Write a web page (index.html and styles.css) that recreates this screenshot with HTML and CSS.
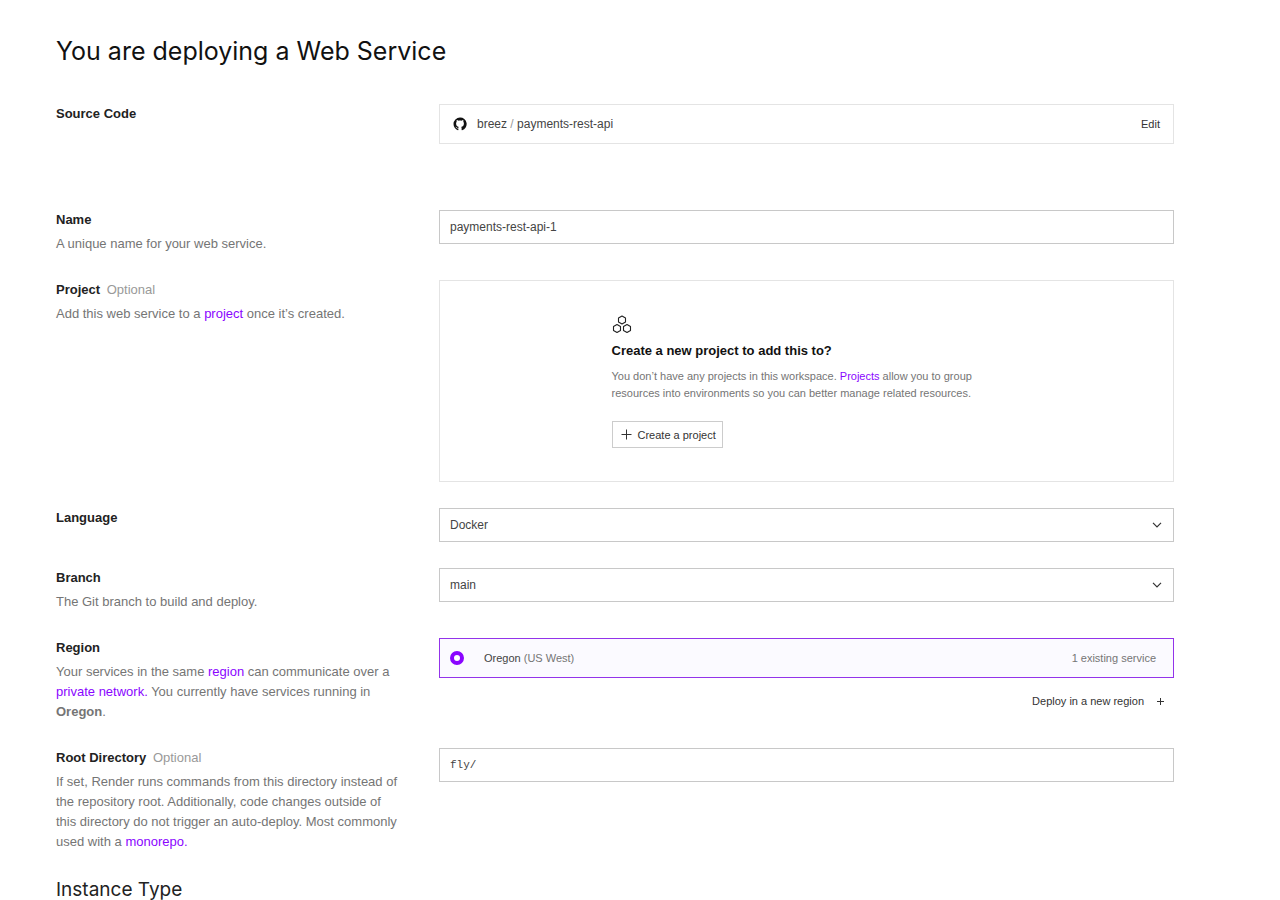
FILE: index.html
```html
<!DOCTYPE html>
<html lang="en">
<head>
  <meta charset="utf-8">
  <meta name="viewport" content="width=device-width, initial-scale=1">
  <title>New Web Service</title>
  <link rel="stylesheet" href="styles.css">
</head>
<body>
  <main class="page">
    <h1 class="page-title">You are deploying a Web Service</h1>
    <form class="form">
      <section class="row row-source">
        <div class="info"><h2 class="label">Source Code</h2></div>
        <div class="repo">
          <svg class="repo-icon" viewBox="0 0 14 14" width="14" height="14" aria-hidden="true"><path fill="currentColor" d="M7 .5A6.500 6.500 0 0 0 .5 7c0 2.900 1.800 5.300 4.400 6.200.4.100.5-.1.5-.4v-1.300c-1.700.3-2.200-.5-2.400-.9-.2-.4-.4-.7-.7-.9.5-.2 1 .2 1.300.6.500.8 1.200.8 1.800.5.1-.4.200-.7.4-.9-1.500-.3-2.700-1-2.700-3.300 0-.8.2-1.400.6-1.900-.2-.5-.2-1.100.1-1.700.7 0 1.300.4 1.800.7.900-.2 1.900-.2 2.800 0 .5-.3 1.100-.7 1.800-.7.3.6.3 1.200.1 1.700.4.500.6 1.100.6 1.900 0 2.300-1.200 3-2.700 3.300.3.300.4.700.4 1.200v1.700c0 .3.1.5.5.4A6.500 6.500 0 0 0 7 .5z"/></svg>
          <span class="repo-name">breez <span class="slash">/</span> payments-rest-api</span>
          <button class="text-button" type="button">Edit</button>
        </div>
      </section>

      <section class="row">
        <div class="info">
          <label class="label" for="name">Name</label>
          <p class="help">A unique name for your web service.</p>
        </div>
        <input class="field" id="name" type="text" value="payments-rest-api-1">
      </section>

      <section class="row">
        <div class="info">
          <h2 class="label">Project <span class="optional">Optional</span></h2>
          <p class="help">Add this web service to a <a href="#project">project</a> once it’s created.</p>
        </div>
        <div class="project">
          <div class="project-body">
            <svg class="project-icon" viewBox="0 0 20 20" width="20" height="20" fill="none" stroke="currentColor" stroke-width="1.1" stroke-linejoin="round" aria-hidden="true"><path d="M10 2l3.500 2v4L10 10 6.500 8V4zM5 10.500l3.500 2v4l-3.500 2-3.500-2v-4zM15 10.500l3.500 2v4l-3.500 2-3.500-2v-4z"/></svg>
            <h3 class="project-title">Create a new project to add this to?</h3>
            <p class="project-text">You don’t have any projects in this workspace. <a href="#projects">Projects</a> allow you to group resources into environments so you can better manage related resources.</p>
            <button class="outline-button" type="button">
              <svg viewBox="0 0 11 11" width="11" height="11" fill="none" stroke="currentColor" aria-hidden="true"><path d="M5.500 .5v10M.5 5.500h10"/></svg>
              Create a project
            </button>
          </div>
        </div>
      </section>

      <section class="row">
        <div class="info"><label class="label" for="language">Language</label></div>
        <div class="select">
          <select class="field" id="language"><option>Docker</option></select>
          <svg class="chevron" viewBox="0 0 10 6" width="10" height="6" fill="none" stroke="currentColor" stroke-width="1.2" aria-hidden="true"><path d="M1 .8l4 4 4-4"/></svg>
        </div>
      </section>

      <section class="row">
        <div class="info">
          <label class="label" for="branch">Branch</label>
          <p class="help">The Git branch to build and deploy.</p>
        </div>
        <div class="select">
          <select class="field" id="branch"><option>main</option></select>
          <svg class="chevron" viewBox="0 0 10 6" width="10" height="6" fill="none" stroke="currentColor" stroke-width="1.2" aria-hidden="true"><path d="M1 .8l4 4 4-4"/></svg>
        </div>
      </section>

      <section class="row">
        <div class="info">
          <h2 class="label">Region</h2>
          <p class="help">Your services in the same <a href="#region">region</a> can communicate over a <a href="#network">private network.</a> You currently have services running in <strong>Oregon</strong>.</p>
        </div>
        <div class="regions">
          <label class="region" for="oregon">
            <input class="radio" id="oregon" type="radio" name="region" checked>
            <span class="region-name">Oregon <span class="muted">(US West)</span></span>
            <span class="muted">1 existing service</span>
          </label>
          <button class="text-button new-region" type="button">
            Deploy in a new region
            <svg viewBox="0 0 7 7" width="7" height="7" fill="none" stroke="currentColor" aria-hidden="true"><path d="M3.500 0v7M0 3.500h7"/></svg>
          </button>
        </div>
      </section>

      <section class="row">
        <div class="info">
          <label class="label" for="root">Root Directory <span class="optional">Optional</span></label>
          <p class="help">If set, Render runs commands from this directory instead of the repository root. Additionally, code changes outside of this directory do not trigger an auto-deploy. Most commonly used with a <a href="#monorepo">monorepo.</a></p>
        </div>
        <input class="field mono" id="root" type="text" value="fly/">
      </section>

      <h2 class="section-title">Instance Type</h2>
    </form>
  </main>
</body>
</html>
```
FILE: styles.css
```css
* { box-sizing: border-box; }

body {
  margin: 0;
  background: #fff;
  color: #222;
  font: 13px/20px "Liberation Sans", Arial, sans-serif;
}

h1, h2, h3, p { margin: 0; }
a { color: #8a05ff; text-decoration: none; }
svg { display: block; flex: none; }

button, input, select { font: inherit; color: inherit; }

.page { padding: 34px 106px 0 56px; }

.page-title {
  font: 400 25px/34px Inter, sans-serif;
  color: #111;
}

.form {
  display: flex;
  flex-direction: column;
  gap: 26px;
  padding-top: 36px;
}

.row {
  display: grid;
  grid-template-columns: minmax(0, 348px) minmax(0, 1fr);
  column-gap: 35px;
  align-items: start;
}

.row-source { padding-bottom: 40px; }

.info { display: flex; flex-direction: column; gap: 4px; }
.label { font-size: 13px; line-height: 20px; font-weight: 700; color: #222; }
.optional { margin-left: 3px; font-weight: 400; color: #999; }
.help { color: #757575; }

.repo {
  display: flex;
  align-items: center;
  height: 40px;
  padding: 0 13px;
  border: 1px solid #e4e4e4;
  font-size: 12px;
}

.repo-icon { color: #111; margin-right: 10px; }
.repo-name { flex: 1; color: #444; }
.slash { color: #999; }

.text-button {
  padding: 0;
  border: 0;
  background: none;
  font-size: 11px;
  color: #333;
}

.field {
  width: 100%;
  height: 34px;
  padding: 0 10px;
  border: 1px solid #c8c8c8;
  border-radius: 0;
  background: #fff;
  font-size: 12px;
  color: #444;
  appearance: none;
}

.mono { font-family: "Liberation Mono", monospace; font-size: 11px; }

.select { display: grid; align-items: center; }
.select > * { grid-area: 1 / 1; }
.chevron { justify-self: end; margin-right: 12px; color: #333; pointer-events: none; }

.project {
  display: flex;
  justify-content: center;
  padding: 33px 20px;
  border: 1px solid #e4e4e4;
}

.project-body {
  display: flex;
  flex-direction: column;
  align-items: flex-start;
  max-width: 390px;
}

.project-icon { color: #222; }
.project-title { margin-top: 7px; font-size: 13px; line-height: 20px; color: #111; }
.project-text { margin-top: 7px; font-size: 11px; line-height: 17px; color: #757575; }

.outline-button {
  display: flex;
  align-items: center;
  gap: 6px;
  height: 27px;
  margin-top: 19px;
  padding: 0 6px 0 8px;
  border: 1px solid #ccc;
  background: #fff;
  font-size: 11px;
  color: #333;
}

.regions { display: flex; flex-direction: column; gap: 13px; }

.region {
  display: flex;
  align-items: center;
  height: 40px;
  padding: 0 17px 0 10px;
  border: 1px solid #9333ea;
  background: #fbfaff;
  font-size: 11px;
  color: #444;
}

.radio {
  flex: none;
  width: 14px;
  height: 14px;
  margin: 0 20px 0 0;
  border: 4px solid #8a05ff;
  border-radius: 50%;
  background: #fff;
  appearance: none;
}

.region-name { flex: 1; }
.muted { color: #757575; }

.new-region {
  display: flex;
  align-items: center;
  align-self: flex-end;
  gap: 13px;
  padding-right: 10px;
}

.section-title {
  font: 400 19px/24px Inter, sans-serif;
  color: #222;
}
```
